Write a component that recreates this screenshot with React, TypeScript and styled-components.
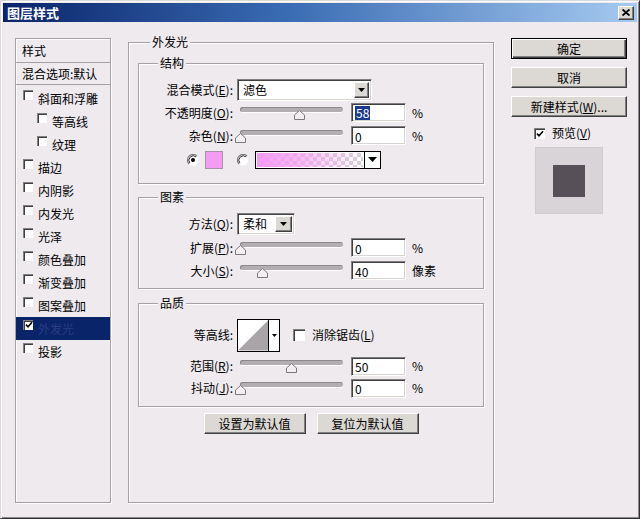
import React from "react";
import styled, { createGlobalStyle, css } from "styled-components";

const FONT = `"Noto Sans CJK SC", "Liberation Sans", sans-serif`;
const BG = "#eeeaee";

const GlobalStyle = createGlobalStyle`
  html, body { margin: 0; padding: 0; background: ${BG}; }
  body { font-family: ${FONT}; font-size: 12px; color: #000; }
  * { box-sizing: border-box; }
  u { text-underline-offset: 1px; }
`;

const sunken = css`
  background: #fff;
  border: 1px solid;
  border-color: #808080 #fff #fff #808080;
  box-shadow: inset 1px 1px 0 #404040, inset -1px -1px 0 #d8d4d0;
`;

const raised = css`
  background: #dcd8d4;
  border: 1px solid;
  border-color: #fff #404040 #404040 #fff;
  box-shadow: inset -1px -1px 0 #808080;
`;

const Window = styled.div`
  width: 640px;
  height: 519px;
  background: ${BG};
  border: 1px solid;
  border-color: #dcd8dc #303030 #303030 #dcd8dc;
  box-shadow: inset 1px 1px 0 #fff, inset -1px -1px 0 #8c888c;
  padding: 2px;
  display: flex;
  flex-direction: column;
`;

const TitleBar = styled.div`
  height: 19px;
  flex: none;
  background: linear-gradient(to right, #0a246a 0%, #3a6cb4 45%, #a6caf0 100%);
  display: flex;
  align-items: center;
  justify-content: space-between;
  padding: 0 3px 0 4px;
`;

const Title = styled.div`
  color: #fff;
  font-weight: bold;
  font-size: 13px;
  line-height: 19px;
  letter-spacing: 0;
`;

const CloseButton = styled.div`
  ${raised};
  width: 16px;
  height: 14px;
  display: flex;
  align-items: center;
  justify-content: center;
`;

const Body = styled.div`
  flex: 1;
  display: flex;
  align-items: flex-start;
  gap: 17px;
  padding: 12px 0 0 12px;
`;

/* ---------- left style list ---------- */
const StyleList = styled.div`
  width: 96px;
  height: 465px;
  margin-top: 4px;
  flex: none;
  border: 1px solid #a4a0a4;
  box-shadow: 1px 1px 0 #fff, inset 1px 1px 0 #fff;
  display: flex;
  flex-direction: column;
`;

const ListHeader = styled.div<{ $h: number }>`
  height: ${(p) => p.$h}px;
  line-height: ${(p) => p.$h - 1}px;
  padding-left: 6px;
  border-bottom: 1px solid #a4a0a4;
  white-space: nowrap;
  overflow: hidden;
`;

const ListItems = styled.div`
  padding-top: 2px;
  display: flex;
  flex-direction: column;
`;

const ListItem = styled.div<{ $indent: boolean; $selected: boolean }>`
  height: 23px;
  display: flex;
  align-items: center;
  gap: 5px;
  padding-left: ${(p) => (p.$indent ? 21 : 7)}px;
  background: ${(p) => (p.$selected ? "#0a246a" : "transparent")};
  color: ${(p) => (p.$selected ? "#2a3c88" : "#000")};
  line-height: 16px;
  white-space: nowrap;
`;

const SmallCheck = styled.span`
  width: 10px;
  height: 10px;
  flex: none;
  margin-bottom: 8px;
  background: #fff;
  border-top: 1px solid #808080;
  border-left: 1px solid #808080;
  box-shadow: inset 1px 1px 0 #404040;
  display: flex;
  align-items: center;
  justify-content: center;
`;

/* ---------- group boxes ---------- */
const MainGroup = styled.fieldset`
  width: 366px;
  height: 469px;
  flex: none;
  margin: 0;
  padding: 5px 9px 0 9px;
  border: 1px solid #a4a0a4;
  box-shadow: 1px 1px 0 #fff, inset 1px 1px 0 #fff;
  min-inline-size: 0;
`;

const SubGroup = styled.fieldset<{ $pt: number; $pb: number; $mt: number }>`
  margin: ${(p) => p.$mt}px 0 0 0;
  padding: ${(p) => p.$pt}px 0 ${(p) => p.$pb}px 0;
  border: 1px solid #a4a0a4;
  box-shadow: 1px 1px 0 #fff, inset 1px 1px 0 #fff;
  min-inline-size: 0;
`;

const Legend = styled.legend<{ $ml: number }>`
  margin-left: ${(p) => p.$ml}px;
  padding: 0 2px;
  line-height: 16px;
  height: 16px;
  background: ${BG};
`;

const Row = styled.div<{ $h: number; $mt?: number }>`
  display: flex;
  align-items: center;
  height: ${(p) => p.$h}px;
  margin-top: ${(p) => p.$mt ?? 0}px;
`;

const Label = styled.div`
  width: 94px;
  margin-right: 4px;
  flex: none;
  text-align: right;
  white-space: nowrap;
  line-height: 16px;
`;

const Select = styled.div<{ $w: number; $btn: number }>`
  ${sunken};
  width: ${(p) => p.$w}px;
  height: 22px;
  flex: none;
  display: flex;
  align-items: stretch;
  padding: 2px;
  & > span {
    flex: 1;
    padding-left: 3px;
    line-height: 16px;
  }
  & > i {
    ${raised};
    width: ${(p) => p.$btn}px;
    flex: none;
    display: flex;
    align-items: center;
    justify-content: center;
  }
`;

const TextField = styled.div`
  ${sunken};
  width: 55px;
  height: 19px;
  flex: none;
  padding: 1px 0 0 3px;
  line-height: 15px;
  display: flex;
  align-items: center;
`;

const Selected = styled.span`
  background: #1c3a8c;
  color: #fff;
  padding: 0 1px;
  line-height: 14px;
`;

const Unit = styled.span`
  margin-left: 6px;
  line-height: 16px;
  white-space: nowrap;
`;

const SliderBox = styled.div`
  position: relative;
  width: 108px;
  height: 14px;
  flex: none;
  margin-right: 6px;
`;

const Track = styled.div`
  margin: 1px 2px 0 3px;
  height: 5px;
  border-radius: 3px;
  background: #b2aeb2;
  box-shadow: inset 1px 1px 0 #8c888c, 0 1px 0 #fff;
`;

const Thumb = styled.svg`
  position: absolute;
  top: 4px;
`;

const RadioRow = styled.div`
  display: flex;
  align-items: center;
  height: 25px;
  padding-left: 48px;
`;

const Swatch = styled.div`
  width: 18px;
  height: 18px;
  margin: 0 14px 0 6px;
  background: #f39cf1;
  border: 1px solid #a892a8;
`;

const GradientBox = styled.div`
  width: 126px;
  height: 18px;
  margin-left: 6px;
  border: 1px solid #000;
  display: flex;
`;

const GradientFill = styled.div`
  flex: 1;
  background:
    linear-gradient(to right, #f59af3 0%, rgba(245, 154, 243, 0.75) 35%, rgba(245, 154, 243, 0) 100%),
    repeating-conic-gradient(#d6d2d6 0% 25%, #fff 0% 50%) 0 0 / 8px 8px;
  border: 1px solid #fff;
`;

const GradientArrow = styled.div`
  width: 16px;
  flex: none;
  border-left: 1px solid #000;
  background: #fff;
  display: flex;
  align-items: center;
  justify-content: center;
`;

const ContourBox = styled.div`
  width: 43px;
  height: 33px;
  flex: none;
  border: 1px solid #000;
  display: flex;
  background: #fff;
`;

const ContourArrow = styled.div`
  width: 11px;
  flex: none;
  border-left: 1px solid #000;
  display: flex;
  align-items: center;
  justify-content: center;
`;

const BigCheck = styled.span`
  width: 12px;
  height: 12px;
  flex: none;
  background: #fff;
  border-top: 1px solid #808080;
  border-left: 1px solid #808080;
  box-shadow: inset 1px 1px 0 #404040;
  display: flex;
  align-items: center;
  justify-content: center;
`;

const CheckText = styled.span`
  margin-left: 7px;
  line-height: 16px;
  white-space: nowrap;
`;

const BottomButtons = styled.div`
  display: flex;
  justify-content: center;
  gap: 11px;
  margin-top: 6px;
`;

const Button = styled.div<{ $w?: number; $default?: boolean }>`
  ${raised};
  width: ${(p) => (p.$w ? `${p.$w}px` : "100%")};
  height: 21px;
  flex: none;
  display: flex;
  align-items: center;
  justify-content: center;
  line-height: 16px;
  white-space: nowrap;
  ${(p) =>
    p.$default &&
    css`
      border-color: #000;
      box-shadow: inset 1px 1px 0 #fff, inset -1px -1px 0 #404040, inset -2px -2px 0 #808080;
    `}
`;

/* ---------- right column ---------- */
const RightColumn = styled.div`
  width: 116px;
  flex: none;
  padding-top: 4px;
  display: flex;
  flex-direction: column;
  gap: 8px;
`;

const PreviewRow = styled.div`
  display: flex;
  align-items: center;
  height: 14px;
  margin-top: 1px;
  padding-left: 23px;
  & > ${BigCheck} {
    width: 11px;
    height: 11px;
  }
`;

const PreviewBox = styled.div`
  width: 68px;
  height: 67px;
  margin-left: 24px;
  margin-top: -1px;
  background: #d8d4d8;
  border: 1px solid #cfcbcf;
  display: flex;
  align-items: center;
  justify-content: center;
`;

const PreviewSquare = styled.div`
  width: 32px;
  height: 32px;
  background: #575058;
`;

/* ---------- small drawings ---------- */
const Down = ({ w = 7, h = 4 }: { w?: number; h?: number }) => (
  <svg width={w} height={h} viewBox={`0 0 ${w} ${h}`}>
    <polygon points={`0,0 ${w},0 ${w / 2},${h}`} fill="#000" />
  </svg>
);

const CheckMark = ({ size = 8 }: { size?: number }) => (
  <svg width={size} height={size} viewBox="0 0 8 8">
    <path d="M1 3.6 L3 5.8 L7 1.2" stroke="#000" strokeWidth="1.6" fill="none" />
  </svg>
);

const Radio = ({ checked }: { checked?: boolean }) => (
  <svg width="12" height="12" viewBox="0 0 12 12">
    <circle cx="6" cy="6" r="5.5" fill="#fff" />
    <path d="M2 10 A5.66 5.66 0 0 1 10 2" stroke="#7c787c" strokeWidth="1.2" fill="none" />
    <path d="M2.9 9.1 A4.4 4.4 0 0 1 9.1 2.9" stroke="#303030" strokeWidth="1" fill="none" />
    {checked && <circle cx="6" cy="6" r="2" fill="#000" />}
  </svg>
);

const Slider = ({ frac }: { frac: number }) => (
  <SliderBox>
    <Track />
    <Thumb style={{ left: 3 + frac * 103 - 5.5 }} width="11" height="10" viewBox="0 0 11 10">
      <path d="M0.5 9.5 V5 L5.5 0.5 L10.5 5 V9.5 Z" fill="#f2eef2" stroke="#7c787c" />
    </Thumb>
  </SliderBox>
);

const SliderRow = ({
  label,
  frac,
  value,
  unit,
  h,
  mt,
  selected,
}: {
  label: React.ReactNode;
  frac: number;
  value: string;
  unit: string;
  h: number;
  mt?: number;
  selected?: boolean;
}) => (
  <Row $h={h} $mt={mt}>
    <Label>{label}</Label>
    <Slider frac={frac} />
    <TextField>{selected ? <Selected>{value}</Selected> : value}</TextField>
    <Unit>{unit}</Unit>
  </Row>
);

const items: { label: string; indent?: boolean; selected?: boolean; checked?: boolean }[] = [
  { label: "斜面和浮雕" },
  { label: "等高线", indent: true },
  { label: "纹理", indent: true },
  { label: "描边" },
  { label: "内阴影" },
  { label: "内发光" },
  { label: "光泽" },
  { label: "颜色叠加" },
  { label: "渐变叠加" },
  { label: "图案叠加" },
  { label: "外发光", selected: true, checked: true },
  { label: "投影" },
];

export default function App() {
  return (
    <>
      <GlobalStyle />
      <Window>
        <TitleBar>
          <Title>图层样式</Title>
          <CloseButton>
            <svg width="8" height="7" viewBox="0 0 8 7">
              <path d="M0.5 0.5 L7.5 6.5 M7.5 0.5 L0.5 6.5" stroke="#000" strokeWidth="1.8" />
            </svg>
          </CloseButton>
        </TitleBar>
        <Body>
          <StyleList>
            <ListHeader $h={24}>样式</ListHeader>
            <ListHeader $h={22}>混合选项:默认</ListHeader>
            <ListItems>
              {items.map((it) => (
                <ListItem key={it.label} $indent={!!it.indent} $selected={!!it.selected}>
                  <SmallCheck>{it.checked && <CheckMark />}</SmallCheck>
                  {it.label}
                </ListItem>
              ))}
            </ListItems>
          </StyleList>

          <MainGroup>
            <Legend $ml={12}>外发光</Legend>

            <SubGroup $mt={0} $pt={7} $pb={11}>
              <Legend $ml={19}>结构</Legend>
              <Row $h={23}>
                <Label>
                  混合模式(<u>E</u>):
                </Label>
                <Select $w={135} $btn={15}>
                  <span>滤色</span>
                  <i>
                    <Down />
                  </i>
                </Select>
              </Row>
              <SliderRow
                h={23}
                label={
                  <>
                    不透明度(<u>O</u>):
                  </>
                }
                frac={0.58}
                value="58"
                unit="%"
                selected
              />
              <SliderRow
                h={23}
                label={
                  <>
                    杂色(<u>N</u>):
                  </>
                }
                frac={0}
                value="0"
                unit="%"
              />
              <RadioRow>
                <Radio checked />
                <Swatch />
                <Radio />
                <GradientBox>
                  <GradientFill />
                  <GradientArrow>
                    <Down w={9} h={5} />
                  </GradientArrow>
                </GradientBox>
              </RadioRow>
            </SubGroup>

            <SubGroup $mt={5} $pt={6} $pb={6}>
              <Legend $ml={19}>图素</Legend>
              <Row $h={25}>
                <Label>
                  方法(<u>Q</u>):
                </Label>
                <Select $w={58} $btn={17}>
                  <span>柔和</span>
                  <i>
                    <Down />
                  </i>
                </Select>
              </Row>
              <SliderRow
                h={23}
                label={
                  <>
                    扩展(<u>P</u>):
                  </>
                }
                frac={0}
                value="0"
                unit="%"
              />
              <SliderRow
                h={23}
                label={
                  <>
                    大小(<u>S</u>):
                  </>
                }
                frac={0.22}
                value="40"
                unit="像素"
              />
            </SubGroup>

            <SubGroup $mt={6} $pt={7} $pb={7}>
              <Legend $ml={19}>品质</Legend>
              <Row $h={34}>
                <Label>等高线:</Label>
                <ContourBox>
                  <svg width="31" height="31" viewBox="0 0 31 31">
                    <rect width="31" height="31" fill="#fff" />
                    <polygon points="0,31 31,0 31,31" fill="#a8a4a8" />
                  </svg>
                  <ContourArrow>
                    <Down w={5} h={3} />
                  </ContourArrow>
                </ContourBox>
                <BigCheck style={{ marginLeft: 13 }} />
                <CheckText>
                  消除锯齿(<u>L</u>)
                </CheckText>
              </Row>
              <SliderRow
                h={22}
                mt={3}
                label={
                  <>
                    范围(<u>R</u>):
                  </>
                }
                frac={0.5}
                value="50"
                unit="%"
              />
              <SliderRow
                h={22}
                label={
                  <>
                    抖动(<u>J</u>):
                  </>
                }
                frac={0}
                value="0"
                unit="%"
              />
            </SubGroup>

            <BottomButtons>
              <Button $w={102}>设置为默认值</Button>
              <Button $w={102}>复位为默认值</Button>
            </BottomButtons>
          </MainGroup>

          <RightColumn>
            <Button $default>确定</Button>
            <Button>取消</Button>
            <Button>
              新建样式(<u>W</u>)...
            </Button>
            <PreviewRow>
              <BigCheck>
                <CheckMark />
              </BigCheck>
              <CheckText>
                预览(<u>V</u>)
              </CheckText>
            </PreviewRow>
            <PreviewBox>
              <PreviewSquare />
            </PreviewBox>
          </RightColumn>
        </Body>
      </Window>
    </>
  );
}
